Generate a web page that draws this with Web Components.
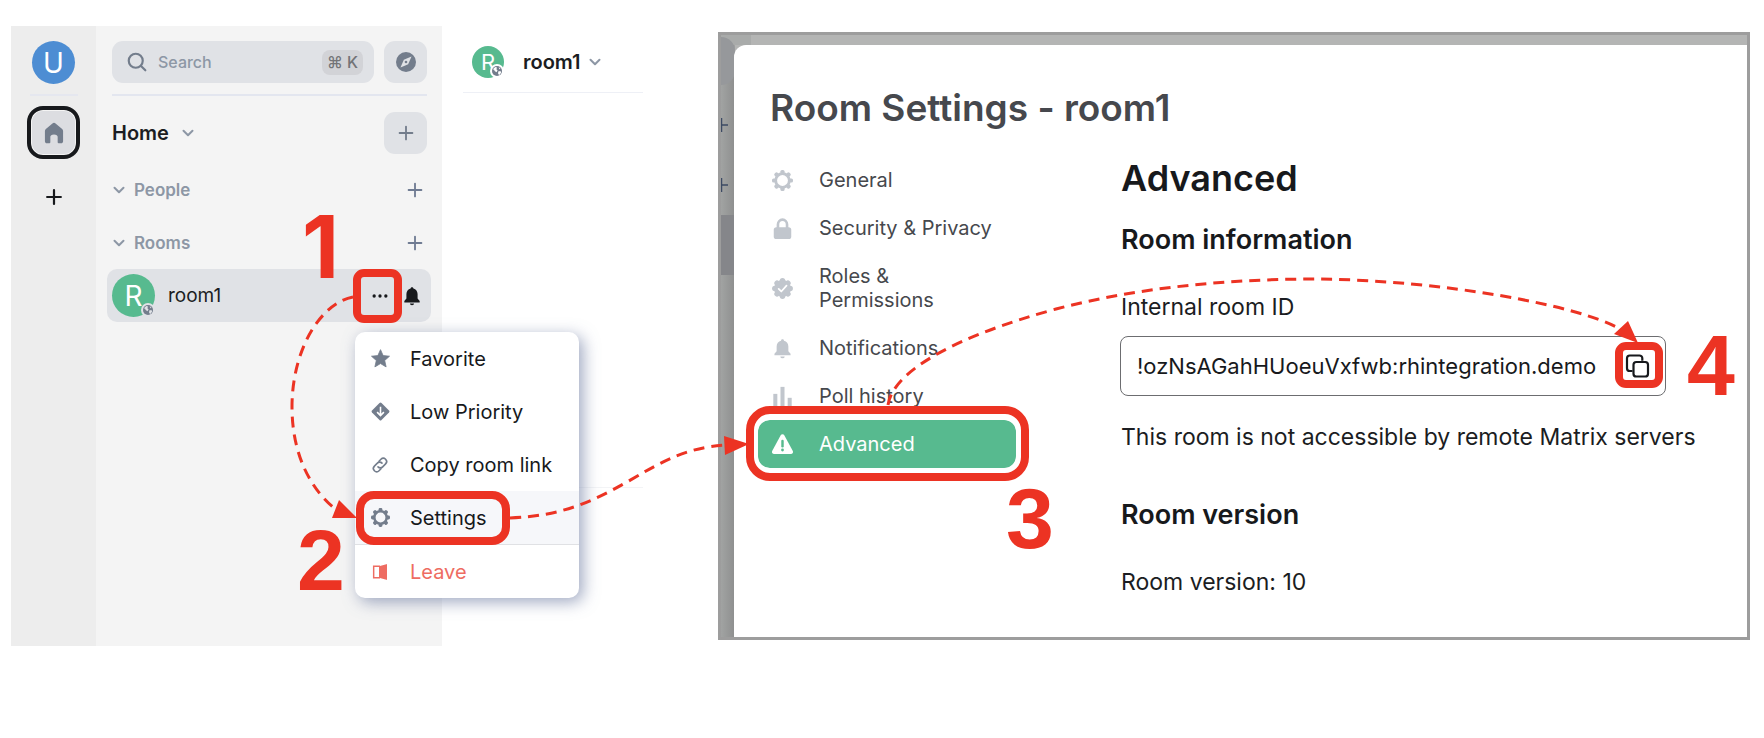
<!DOCTYPE html>
<html lang="en">
<head>
<meta charset="utf-8">
<meta name="viewport" content="width=device-width, initial-scale=1">
<title>Find the internal room ID</title>
<style>
  body { margin: 0; background: #fff; color: #1b1d22; font-family: Inter, "Liberation Sans", sans-serif; }
</style>
</head>
<body>
<room-guide></room-guide>

<script>
const define = (name, html) => {
  const template = document.createElement('template');
  template.innerHTML = html;
  customElements.define(name, class extends HTMLElement {
    constructor() {
      super();
      this.attachShadow({ mode: 'open' }).append(template.content.cloneNode(true));
    }
  });
};

const RESET = `
  *, *::before, *::after { box-sizing: border-box; }
  button { font: inherit; color: inherit; background: none; border: 0; padding: 0; margin: 0; display: inline-flex; align-items: center; justify-content: center; cursor: pointer; }
  input { font: inherit; color: inherit; background: none; border: 0; padding: 0; margin: 0; min-width: 0; outline: 0; }
  h1, h2, h3, p, ul { margin: 0; padding: 0; font-weight: inherit; }
  ul { list-style: none; }
`;

/* Icons, all drawn in a 24 x 24 box */
const gear = (() => {
  let teeth = '';
  for (let i = 0; i < 8; i++) teeth += `<rect x="9.6" y="0" width="4.8" height="5" rx="1.8" transform="rotate(${i * 45} 12 12)"/>`;
  return `<g fill="currentColor">${teeth}</g><circle cx="12" cy="12" r="7.8" fill="none" stroke="currentColor" stroke-width="3.2"/>`;
})();
const seal = (() => {
  let bumps = '';
  for (let i = 0; i < 8; i++) bumps += `<circle cx="12" cy="3.2" r="3.1" transform="rotate(${i * 45} 12 12)"/>`;
  return `<g fill="currentColor">${bumps}<circle cx="12" cy="12" r="9.6"/></g><path d="M7.6 12.4l3 3 6-6.600" fill="none" stroke="#fff" stroke-width="2" stroke-linecap="round" stroke-linejoin="round"/>`;
})();
const ICONS = {
  search: '<g fill="none" stroke="currentColor" stroke-width="2.6" stroke-linecap="round"><circle cx="10.5" cy="10.5" r="8.4"/><path d="M16.800 16.800l5.200 5.200"/></g>',
  compass: '<circle cx="12" cy="12" r="12" fill="currentColor"/><path d="M18.6 5.4l-4 9.2-9.2 4 4-9.2z" fill="#e0e2e6"/><circle cx="12" cy="12" r="1.6" fill="currentColor"/>',
  home: '<path d="M12 .8c.6 0 1.2.2 1.7.7l7.2 6.2c.7.6 1 1.300 1 2.200v11c0 1.300-.9 2.300-2.200 2.300h-2.700c-.6 0-1-.4-1-1v-6c0-1.700-1.400-2.700-4-2.700s-4 1-4 2.700v6c0 .6-.4 1-1 1H4.300c-1.300 0-2.200-1-2.200-2.300v-11c0-.9.3-1.600 1-2.200l7.200-6.200c.5-.5 1.100-.7 1.700-.7z" fill="currentColor"/>',
  plus: '<path d="M12 5v14M5 12h14" fill="none" stroke="currentColor" stroke-width="2" stroke-linecap="round"/>',
  plusBold: '<path d="M12 4.500v15M4.500 12h15" fill="none" stroke="currentColor" stroke-width="2.400" stroke-linecap="round"/>',
  chevron: '<path d="M3 7.500l9 9 9-9" fill="none" stroke="currentColor" stroke-width="4" stroke-linecap="round" stroke-linejoin="round"/>',
  dots: '<g fill="currentColor"><circle cx="5" cy="12" r="2"/><circle cx="12" cy="12" r="2"/><circle cx="19" cy="12" r="2"/></g>',
  bell: '<path d="M12 1.500c.9 0 1.500.6 1.700 1.500 3.100.8 5 3.400 5 6.700v5.300l2.500 3v1.700H2.800V18l2.500-3V9.700c0-3.300 1.900-5.900 5-6.700.2-.9.8-1.500 1.700-1.500z" fill="currentColor"/><path d="M9.500 21h5a2.500 2.200 0 0 1-5 0z" fill="currentColor"/>',
  star: '<path d="M12 .8l3.300 7.500 8.100.8-6.100 5.400 1.800 8.100L12 18.400l-7.100 4.200 1.800-8.100L.6 9.100l8.100-.8z" fill="currentColor" stroke="currentColor" stroke-linejoin="round"/>',
  low: '<rect x="3.500" y="3.500" width="17" height="17" rx="1.800" transform="rotate(45 12 12)" fill="currentColor"/><path d="M12 6v11M7.700 12.800l4.300 4.400 4.300-4.400" fill="none" stroke="#fff" stroke-width="2"/>',
  link: '<g fill="none" stroke="currentColor" stroke-width="2.400" stroke-linecap="round"><path d="M10.500 6.300l2.900-2.900a4.700 4.700 0 0 1 7 7l-4.400 4.400a4.700 4.700 0 0 1-7 0"/><path d="M13.500 17.700l-2.900 2.900a4.700 4.700 0 0 1-7-7l4.400-4.400a4.700 4.700 0 0 1 7 0"/></g>',
  gear,
  leave: '<path d="M12 3.500H2.500v17H12" fill="none" stroke="currentColor" stroke-width="2.200"/><path d="M10.500 3.300L21.500.2a.8.800 0 0 1 1 .8v22a.8.800 0 0 1-1 .8L10.500 20.700z" fill="currentColor"/>',
  lock: '<rect x="2" y="10.500" width="20" height="13.500" rx="3" fill="currentColor"/><path d="M6.800 12V7.500a5.200 5.600 0 0 1 10.400 0V12" fill="none" stroke="currentColor" stroke-width="3"/>',
  seal,
  poll: '<g fill="currentColor"><rect x="1.500" y="9" width="4.600" height="17"/><rect x="9.700" y="1" width="4.600" height="25"/><rect x="17.900" y="13.500" width="4.600" height="12"/></g>',
  warning: '<path d="M9.800 1.600a2.600 2.600 0 0 1 4.400 0l9.600 17.700c.9 1.700-.3 3.500-2.200 3.500H2.400c-1.900 0-3.100-1.800-2.200-3.500z" fill="currentColor"/><path d="M12 8v6" stroke="#57ba8f" stroke-width="2.800" stroke-linecap="round"/><circle cx="12" cy="18.300" r="1.600" fill="#57ba8f"/>',
  copy: '<g fill="none" stroke="currentColor" stroke-width="2.200" stroke-linejoin="round"><path d="M7.500 17H4.800A2.800 2.800 0 0 1 2 14.200V4.300a2.800 2.800 0 0 1 2.800-2.800h9.700a2.800 2.800 0 0 1 2.800 2.800v2.400"/><rect x="8.500" y="8" width="14.500" height="14.500" rx="2.800"/></g>',
  globe: '<circle cx="12" cy="12" r="12" fill="var(--ring, #fff)"/><circle cx="12" cy="12" r="8.600" fill="#737d8c"/><path d="M5 9l4-4 3 1-1 3 2 2-2 3-3-2-1-2zM14 13l4-1 1 3-3 4-2-2zM15 5l3 3-2 1z" fill="var(--ring, #fff)"/>'
};

customElements.define('ui-icon', class extends HTMLElement {
  constructor() {
    super();
    this.attachShadow({ mode: 'open' });
  }
  connectedCallback() {
    this.shadowRoot.innerHTML = `
      <style>
        :host { display: inline-block; flex: none; width: 20px; height: 20px; }
        svg { display: block; width: 100%; height: 100%; overflow: visible; }
      </style>
      <svg viewBox="0 0 24 24" aria-hidden="true">${ICONS[this.getAttribute('name')]}</svg>`;
  }
});

define('room-avatar', `
  <style>${RESET}
    :host { position: relative; display: inline-flex; align-items: center; justify-content: center; flex: none;
      width: 43px; height: 43px; border-radius: 50%; background: #57ba8f; color: #fff; font-size: 28px; line-height: 32px; }
    ui-icon { position: absolute; right: 0; bottom: 0; width: 14px; height: 14px; }
  </style>
  <slot></slot><ui-icon name="globe"></ui-icon>
`);

define('space-rail', `
  <style>${RESET}
    :host { display: flex; flex-direction: column; align-items: center; padding-top: 15px; background: #ededed; }
    .user { width: 43px; height: 43px; border-radius: 50%; background: #4d8dd3; color: #fff; font-size: 28px; line-height: 32px; }
    hr { width: 48px; height: 2px; margin: 10px 0; border: 0; background: #e5e7ef; }
    .home { width: 53px; height: 53px; border: 4px solid #17191c; border-radius: 16px; background: #dcdde1; box-shadow: inset 0 0 0 1px #f4f4f4; color: #737d8c; }
    .home ui-icon { width: 22px; height: 22px; }
    .add { width: 24px; height: 24px; margin-top: 26px; color: #17191c; }
    .add ui-icon { width: 22px; height: 22px; }
  </style>
  <button class="user" type="button" aria-label="User menu">U</button>
  <hr>
  <button class="home" type="button" aria-label="Home"><ui-icon name="home"></ui-icon></button>
  <button class="add" type="button" aria-label="Create a space"><ui-icon name="plusBold"></ui-icon></button>
`);

define('list-section', `
  <style>${RESET}
    :host { display: flex; align-items: center; height: 24px; color: #8d97a5; font-size: 17px; line-height: 24px; font-weight: 600; }
    .chev { width: 12px; height: 12px; margin: 0 9px 0 1px; }
    h3 { flex: 1; font-size: 17px; }
    button { width: 24px; height: 24px; color: #6f7b92; }
    button ui-icon { width: 22px; height: 22px; }
  </style>
  <ui-icon class="chev" name="chevron"></ui-icon>
  <h3><slot></slot></h3>
  <button type="button" aria-label="Add"><ui-icon name="plus"></ui-icon></button>
`);

define('menu-item', `
  <style>${RESET}
    :host { display: block; }
    button { width: 100%; height: 53px; padding-left: 15px; gap: 20px; justify-content: flex-start; font-size: 20px; line-height: 24px; }
    .icon { display: flex; justify-content: center; width: 20px; color: var(--icon, #737d8c); }
  </style>
  <button type="button" role="menuitem"><span class="icon"><slot name="icon"></slot></span><slot></slot></button>
`);

define('room-menu', `
  <style>${RESET}
    :host { display: block; width: 224px; border-radius: 10px; background: #fff; overflow: hidden; color: #17191c;
      box-shadow: 4px 4px 16px rgba(118, 131, 166, 0.7); }
    .current { background: #f6f7fa; }
    .danger { border-top: 1px solid #e0e1e4; color: #ee6c62; --icon: #ee6c62; }
    .small { width: 16px; height: 16px; }
    ui-icon { width: 19px; height: 19px; }
  </style>
  <menu-item><ui-icon slot="icon" name="star"></ui-icon>Favorite</menu-item>
  <menu-item><ui-icon slot="icon" name="low"></ui-icon>Low Priority</menu-item>
  <menu-item><ui-icon class="small" slot="icon" name="link"></ui-icon>Copy room link</menu-item>
  <menu-item class="current"><ui-icon slot="icon" name="gear"></ui-icon>Settings</menu-item>
  <menu-item class="danger"><ui-icon class="small" slot="icon" name="leave"></ui-icon>Leave</menu-item>
`);

define('room-list', `
  <style>${RESET}
    :host { display: flex; flex-direction: column; padding: 15px 15px 0 16px; background: #f4f4f4; }
    .top { display: flex; gap: 10px; }
    .search { flex: 1; min-width: 0; display: flex; align-items: center; height: 42px; padding: 0 11px 0 15px; border-radius: 11px;
      background: #e0e2e6; color: #737d8c; font-size: 16px; line-height: 20px; font-weight: 500; }
    .search ui-icon { width: 20px; height: 20px; margin-right: 11px; }
    .search input { flex: 1; width: 0; }
    .search input::placeholder { color: #8d97a5; opacity: 1; }
    kbd { height: 25px; padding: 0 5px; border-radius: 8px; background: #d2d3d7; color: #737477; font: inherit; line-height: 25px; }
    .tile { flex: none; width: 43px; height: 42px; border-radius: 11px; background: #e0e2e6; color: #737d8c; }
    .tile ui-icon { width: 20px; height: 20px; }
    .tile .plus { width: 22px; height: 22px; }
    hr { width: 100%; height: 2px; margin: 11px 0 16px; border: 0; background: #e3e6ef; }
    .heading { display: flex; align-items: center; justify-content: space-between; margin-bottom: 24px; }
    .heading h2 { display: flex; }
    .heading h2 button { gap: 13px; font-size: 20px; line-height: 24px; font-weight: 600; }
    .chev { width: 12px; height: 12px; color: #8d97a5; }
    .rooms { margin-top: 29px; }
    .room { position: relative; display: flex; align-items: center; height: 53px; margin: 14px -4px 0 -5px; padding: 0 7px 0 5px;
      border-radius: 10px; background: #e0e2e6; font-size: 19px; line-height: 24px; }
    .room room-avatar { --ring: #e0e2e6; margin-right: 13px; }
    .room a { flex: 1; color: inherit; text-decoration: none; }
    .room button { width: 24px; height: 24px; margin-left: 8px; color: #17191c; }
    .room button ui-icon { width: 20px; height: 20px; }
    room-menu { position: absolute; top: 63px; left: 248px; z-index: 1; }
  </style>
  <div class="top">
    <label class="search"><ui-icon name="search"></ui-icon><input type="search" placeholder="Search" aria-label="Search"><kbd>⌘ K</kbd></label>
    <button class="tile" type="button" aria-label="Explore rooms"><ui-icon name="compass"></ui-icon></button>
  </div>
  <hr>
  <div class="heading">
    <h2><button type="button">Home<ui-icon class="chev" name="chevron"></ui-icon></button></h2>
    <button class="tile" type="button" aria-label="Add"><ui-icon class="plus" name="plus"></ui-icon></button>
  </div>
  <list-section>People</list-section>
  <list-section class="rooms">Rooms</list-section>
  <div class="room">
    <room-avatar>R</room-avatar>
    <a href="#room1">room1</a>
    <button type="button" aria-label="Room options"><ui-icon name="dots"></ui-icon></button>
    <button type="button" aria-label="Notifications"><ui-icon name="bell"></ui-icon></button>
    <room-menu role="menu"></room-menu>
  </div>
`);

define('room-view', `
  <style>${RESET}
    :host { display: flex; flex-direction: column; padding-left: 21px; }
    header { display: flex; align-items: center; height: 67px; padding: 5px 0 0 9px; border-bottom: 1px solid #eef0f6; }
    room-avatar { width: 32px; height: 32px; margin-right: 19px; font-size: 22px; }
    room-avatar::part(badge) { width: 12px; }
    h2 { display: flex; }
    h2 button { gap: 8px; font-size: 20px; line-height: 24px; font-weight: 600; }
    .chev { width: 12px; height: 12px; color: #8d97a5; }
    .timeline { flex: 1; margin-bottom: 158px; border-bottom: 1px solid #f3f4f6; }
  </style>
  <header><room-avatar>R</room-avatar><h2><button type="button">room1<ui-icon class="chev" name="chevron"></ui-icon></button></h2></header>
  <div class="timeline"></div>
`);

define('client-window', `
  <style>
    :host { position: relative; z-index: 1; display: grid; grid-template-columns: 85px 346px 1fr; min-height: 84vh; }
    room-list { z-index: 1; }
  </style>
  <space-rail></space-rail><room-list></room-list><room-view></room-view>
`);

define('settings-tab', `
  <style>${RESET}
    :host { display: block; }
    button { width: 100%; padding: 12px 12px 12px 13px; gap: 26px; justify-content: flex-start; border-radius: 12px; text-align: left;
      font-size: 20px; line-height: 24px; color: #46484d; }
    .icon { display: flex; flex: none; justify-content: center; width: 22px; color: #c1c6cd; }
    :host([selected]) button { background: #57ba8f; color: #fff; }
    :host([selected]) .icon { color: #fff; }
  </style>
  <button type="button" role="tab"><span class="icon"><slot name="icon"></slot></span><span><slot></slot></span></button>
`);

define('copy-field', `
  <style>${RESET}
    :host { display: block; font-size: 23px; line-height: 28px; }
    label { display: block; margin-bottom: 15px; }
    .box { display: flex; align-items: center; width: 100%; max-width: 546px; height: 60px; margin-left: -1px; padding: 0 16px; border: 1px solid #6c6d70; border-radius: 8px; }
    input { flex: 1; height: 28px; font-size: 22px; line-height: 28px; color: #17191c; }
    button { color: #17191c; }
    ui-icon { width: 24px; height: 24px; }
  </style>
  <label for="room-id">Internal room ID</label>
  <div class="box">
    <input id="room-id" type="text" readonly value="!ozNsAGahHUoeuVxfwb:rhintegration.demo">
    <button type="button" aria-label="Copy"><ui-icon name="copy"></ui-icon></button>
  </div>
`);

define('settings-window', `
  <style>${RESET}
    :host { position: relative; display: block; border: 3px solid #9d9d9d; padding: 10px 0 0 13px; background: linear-gradient(90deg, #a1a3a2, #8f9090 13px, #b4b5b4 14px); }
    .behind { position: absolute; left: 0; top: 0; width: 40px; height: 260px; }
    .dialog { position: relative; padding: 41px 40px 41px 24px; border-top-left-radius: 12px; background: #fff; }
    h1 { padding-left: 12px; margin-bottom: 26px; font-size: 37px; line-height: 44px; font-weight: 600; color: #46484d; }
    .columns { display: grid; grid-template-columns: 258px minmax(0, 1fr); gap: 105px; }
    .columns > nav ui-icon { width: 21px; height: 21px; }
    section { font-size: 23px; line-height: 28px; }
    h2 { font-size: 36px; line-height: 44px; font-weight: 600; color: #17191c; }
    h3 { margin: 24px 0 37px; font-size: 27px; line-height: 32px; font-weight: 600; color: #17191c; }
    p.note { margin: 27px 0 48px; white-space: nowrap; }
  </style>
  <svg class="behind" viewBox="0 0 40 260" aria-hidden="true">
    <rect width="30" height="10" fill="#a9abaa"/>
    <rect x="-30" y="2" width="44" height="48" rx="14" fill="#96989b"/>
    <rect x="-30" y="180" width="48" height="60" fill="#85868a"/>
    <path d="M.5 83v14M0 90h7M.5 143v14M0 150h7" stroke="#3c4a63" stroke-width="1.500"/>
  </svg>
  <div class="dialog" role="dialog" aria-label="Room Settings">
    <h1>Room Settings - room1</h1>
    <div class="columns">
      <nav role="tablist">
        <settings-tab><ui-icon slot="icon" name="gear"></ui-icon>General</settings-tab>
        <settings-tab><ui-icon slot="icon" name="lock"></ui-icon>Security &amp; Privacy</settings-tab>
        <settings-tab><ui-icon slot="icon" name="seal"></ui-icon>Roles &amp;<br>Permissions</settings-tab>
        <settings-tab><ui-icon slot="icon" name="bell"></ui-icon>Notifications</settings-tab>
        <settings-tab><ui-icon slot="icon" name="poll"></ui-icon>Poll history</settings-tab>
        <settings-tab selected><ui-icon slot="icon" name="warning"></ui-icon>Advanced</settings-tab>
      </nav>
      <section>
        <h2>Advanced</h2>
        <h3>Room information</h3>
        <copy-field></copy-field>
        <p class="note">This room is not accessible by remote Matrix servers</p>
        <h3>Room version</h3>
        <p>Room version: 10</p>
      </section>
    </div>
  </div>
`);

/* Numbered call-outs and the arrows that join them, drawn on a free canvas over the two windows */
define('step-overlay', `
  <style>
    :host { position: absolute; left: 0; top: 0; z-index: 2; width: 1764px; height: 660px; max-width: 100%; overflow: hidden; pointer-events: none; }
    svg { display: block; }
    .box, .path { fill: none; stroke: #ec3323; }
    .box { stroke-width: 8; }
    .path { stroke-width: 3; stroke-dasharray: 11 7; }
    .gap { fill: none; stroke: #fff; stroke-width: 6; }
    .head { fill: #ec3323; }
    text { fill: #ec3323; font: bold 86px/1 "Liberation Sans", Arial, sans-serif; }
    .one { font-family: Inter, sans-serif; }
  </style>
  <svg width="1764" height="660" viewBox="0 0 1764 660">
    <rect class="gap" x="755" y="417" width="264" height="54" rx="14"/>
    <path class="path" d="M353 297C321 303 292 349 292 407C292 456 312 492 338 511"/>
    <path class="path" d="M510 518C560 516 590 503 627 482C660 463 685 447 727 445"/>
    <path class="path" d="M888 405C893 370 960 335 1056 309C1140 287 1230 279 1316 279C1440 280 1580 305 1622 330"/>
    <path class="head" d="M357 518L339 500L332 518z"/>
    <path class="head" d="M749 444L724 436L725 455z"/>
    <path class="head" d="M1638 343L1628 321L1614 334z"/>
    <rect class="box" x="357" y="273" width="41" height="46" rx="7"/>
    <rect class="box" x="360" y="495" width="146" height="46" rx="14"/>
    <rect class="box" x="750" y="410" width="275" height="67" rx="20"/>
    <rect class="box" x="1619" y="346" width="40" height="38" rx="7"/>
    <text class="one" x="302" y="278">1</text>
    <text x="297" y="590">2</text>
    <text x="1006" y="548">3</text>
    <text x="1687" y="395">4</text>
  </svg>
`);

define('room-guide', `
  <style>
    :host { position: relative; display: grid; grid-template-columns: 632px minmax(0, 1fr); gap: 75px; align-items: start; padding: 26px 14px 0 11px; }
    settings-window { margin-top: 6px; }
  </style>
  <client-window></client-window>
  <settings-window></settings-window>
  <step-overlay></step-overlay>
`);
</script>
</body>
</html>
